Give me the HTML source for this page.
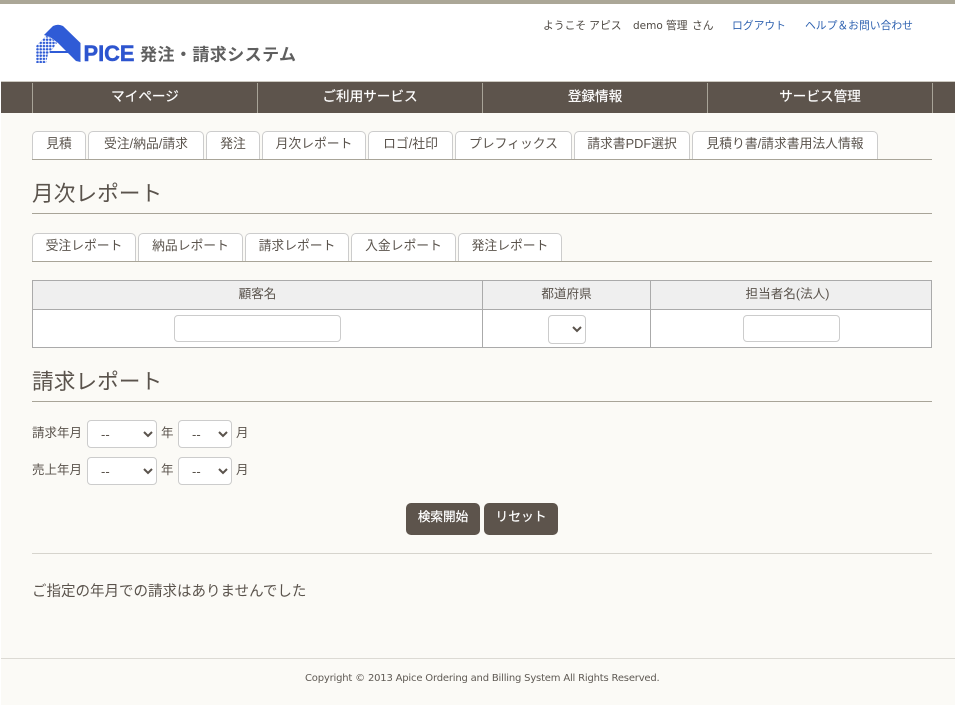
<!DOCTYPE html>
<html lang="ja"><head><meta charset="utf-8"><title>月次レポート</title>
<style>
html,body{margin:0;padding:0;background:#fff}
body{width:955px;height:707px;position:relative;overflow:hidden;font-family:"Liberation Sans","Noto Sans CJK JP",sans-serif;color:#5a534c;font-size:12px}
.a{position:absolute;box-sizing:border-box;white-space:nowrap}
.top{left:0;top:0;width:955px;height:4px;background:#aba797}
.bg{left:1px;top:113px;width:954px;height:592px;background:#fbfaf6}
.nav{left:1px;top:81px;width:954px;height:32px;background:#5d544c;border-top:1px solid #ccc9c0}
.navi{top:82px;height:31px;width:226px;color:#fff;font-size:13.600px;line-height:27px;text-align:center;border-left:1px solid #a8a498;-webkit-text-stroke:.2px #fff}
.tab{height:29px;background:#fff;border:1px solid #ccc;border-bottom:none;border-radius:5px 5px 0 0;text-align:center;font-size:12.800px;line-height:24px;color:#5a534c}
.ln{height:1px;background:#a8a498}
h2{margin:0;font-weight:normal;font-size:21.700px;line-height:30px;color:#5a534c}
.cell{text-align:center;font-size:12.600px;line-height:26px;background:#efefef}
input,select{position:absolute;box-sizing:border-box;background:#fff;border:1px solid #ccc;border-radius:4px;margin:0;font-family:inherit;font-size:13px;color:#5a534c;padding:0 8px}
select{padding-left:9px}
.btn{height:32px;background:#5d544c;border-radius:5px;color:#fff;font-size:12.600px;line-height:27px;text-align:center;-webkit-text-stroke:.2px #fff}
.lb{font-size:12.500px;line-height:18px}
.tr{top:18px;font-size:10.800px;line-height:16px;color:#4f4a44}
</style></head><body>
<div class="a top"></div>
<div class="a bg"></div>

<svg class="a" style="left:30px;top:20px" width="275" height="48" viewBox="30 20 275 48">
<defs>
<pattern id="d" x="36" y="35" width="3.200" height="3.200" patternUnits="userSpaceOnUse"><circle cx="1.500" cy="1.500" r="1.250" fill="#2f5bd6"/></pattern>
</defs>
<polygon points="36,63 36,46 46,36 50,37 57,43 51,51 48,54 46,63" fill="url(#d)"/>
<path d="M44 35 L53 26 Q58 23.500 63 26 L80.500 43 L80.500 62 L76 61 L68 53 L50 53 L50 51 L66 51 L58 43 L50 37 Z" fill="#2f5bd6"/>
<text x="83.500" y="61" font-family="Liberation Sans" font-weight="700" font-size="22" fill="#2d55cf" stroke="#2d55cf" stroke-width=".5" textLength="51" lengthAdjust="spacingAndGlyphs">PICE</text>
<text x="140" y="60.500" font-family="Liberation Sans,Noto Sans CJK JP,sans-serif" font-weight="700" font-size="17" fill="#5f5f5f" textLength="156">発注・請求システム</text>
</svg>

<div class="a tr" style="left:543px">ようこそ アピス</div>
<div class="a tr" style="left:633px;font-family:'DejaVu Sans',sans-serif;font-size:10.500px">demo</div>
<div class="a tr" style="left:666px">管理</div>
<div class="a tr" style="left:692px">さん</div>
<div class="a tr" style="left:732px;color:#2f62b0">ログアウト</div>
<div class="a tr" style="left:805px;color:#2f62b0">ヘルプ＆お問い合わせ</div>

<div class="a nav"></div>
<div class="a navi" style="left:32px;top:83px;height:30px;padding-right:1px">マイページ</div>
<div class="a navi" style="left:257px;top:83px;height:30px;padding-right:1px">ご利用サービス</div>
<div class="a navi" style="left:482px;top:83px;height:30px;padding-right:1px">登録情報</div>
<div class="a navi" style="left:707px;top:83px;height:30px;padding-right:1px">サービス管理</div>
<div class="a navi" style="left:932px;top:83px;height:30px;width:23px"></div>

<div class="a tab" style="left:32px;top:131px;width:54px">見積</div>
<div class="a tab" style="left:88px;top:131px;width:116px">受注/納品/請求</div>
<div class="a tab" style="left:206px;top:131px;width:54px">発注</div>
<div class="a tab" style="left:262px;top:131px;width:104px">月次レポート</div>
<div class="a tab" style="left:368px;top:131px;width:85px">ロゴ/社印</div>
<div class="a tab" style="left:455px;top:131px;width:117px">プレフィックス</div>
<div class="a tab" style="left:574px;top:131px;width:116px">請求書PDF選択</div>
<div class="a tab" style="left:692px;top:131px;width:186px">見積り書/請求書用法人情報</div>
<div class="a ln" style="left:32px;top:159px;width:900px"></div>

<h2 class="a" style="left:32px;top:179px">月次レポート</h2>
<div class="a ln" style="left:32px;top:213px;width:900px"></div>

<div class="a tab" style="left:32px;top:233px;width:104px">受注レポート</div>
<div class="a tab" style="left:138px;top:233px;width:105px">納品レポート</div>
<div class="a tab" style="left:245px;top:233px;width:104px">請求レポート</div>
<div class="a tab" style="left:351px;top:233px;width:105px">入金レポート</div>
<div class="a tab" style="left:458px;top:233px;width:104px">発注レポート</div>
<div class="a ln" style="left:32px;top:261px;width:900px"></div>

<div class="a" style="left:32px;top:280px;width:900px;height:68px;background:#fff;border:1px solid #aaa"></div>
<div class="a cell" style="left:33px;top:281px;width:449px;height:28px">顧客名</div>
<div class="a cell" style="left:483px;top:281px;width:167px;height:28px">都道府県</div>
<div class="a cell" style="left:651px;top:281px;width:280px;height:28px;padding-right:7px">担当者名(法人)</div>
<div class="a" style="left:33px;top:309px;width:898px;height:1px;background:#aaa"></div>
<div class="a" style="left:482px;top:281px;width:1px;height:66px;background:#aaa"></div>
<div class="a" style="left:650px;top:281px;width:1px;height:66px;background:#aaa"></div>
<input type="text" style="left:174px;top:315px;width:167px;height:27px">
<select style="left:548px;top:315px;width:38px;height:29px"><option></option></select>
<input type="text" style="left:743px;top:315px;width:97px;height:27px">

<h2 class="a" style="left:32px;top:367px">請求レポート</h2>
<div class="a ln" style="left:32px;top:401px;width:900px"></div>

<div class="a lb" style="left:32px;top:424px">請求年月</div>
<select style="left:87px;top:420px;width:70px;height:28px"><option>--</option></select>
<div class="a lb" style="left:161px;top:424px">年</div>
<select style="left:178px;top:420px;width:54px;height:28px"><option>--</option></select>
<div class="a lb" style="left:236px;top:424px">月</div>

<div class="a lb" style="left:32px;top:461px">売上年月</div>
<select style="left:87px;top:457px;width:70px;height:28px"><option>--</option></select>
<div class="a lb" style="left:161px;top:461px">年</div>
<select style="left:178px;top:457px;width:54px;height:28px"><option>--</option></select>
<div class="a lb" style="left:236px;top:461px">月</div>

<div class="a btn" style="left:406px;top:503px;width:74px;line-height:28px">検索開始</div>
<div class="a btn" style="left:484px;top:503px;width:74px;font-size:12.800px">リセット</div>

<div class="a" style="left:32px;top:553px;width:900px;height:1px;background:#d6d4cd"></div>
<div class="a" style="left:32px;top:582px;font-size:14.500px;line-height:20px">ご指定の年月での請求はありませんでした</div>

<div class="a" style="left:1px;top:658px;width:954px;height:1px;background:#dcdad4"></div>
<div class="a" style="left:305px;top:671px;font-size:10px;line-height:16px;font-family:'DejaVu Sans',sans-serif;color:#5f5a54;letter-spacing:-.19px">Copyright © 2013 Apice Ordering and Billing System All Rights Reserved.</div>
</body></html>
